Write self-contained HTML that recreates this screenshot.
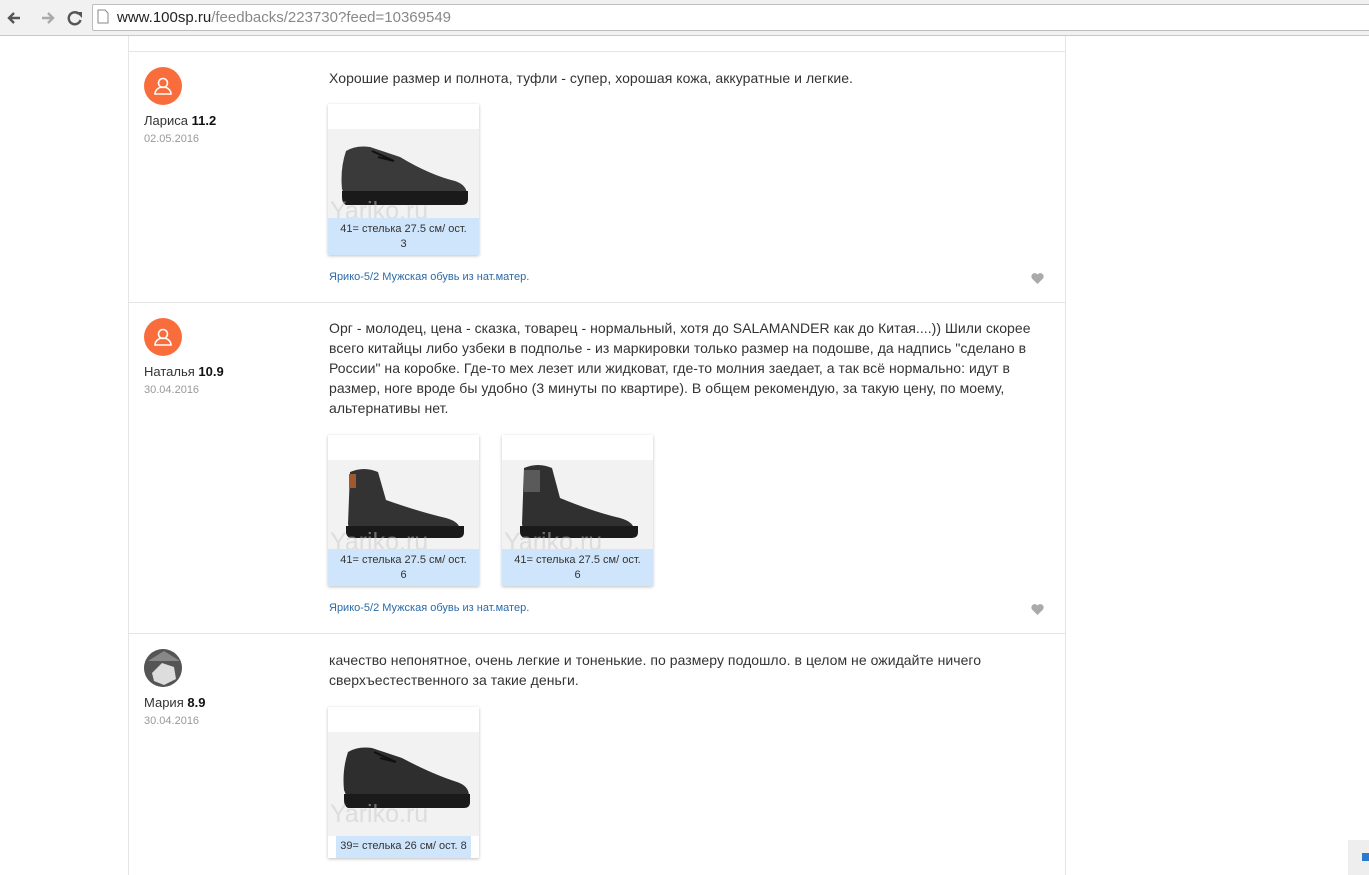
<!DOCTYPE html>
<html><head><meta charset="utf-8"><style>
*{margin:0;padding:0;box-sizing:border-box}
body{width:1369px;height:875px;overflow:hidden;background:#fff;font-family:"Liberation Sans",Arial,sans-serif;position:relative;color:#333}
.bar{position:absolute;left:0;top:0;width:1369px;height:36px;background:#f1f1f1;border-bottom:1px solid #c8c8c8}
.addr{position:absolute;left:92px;top:4px;width:1290px;height:27px;background:#fff;border:1px solid #bdbdbd;border-radius:2px}
.url{position:absolute;left:117px;top:9px;font-size:15px;color:#888}
.url b{font-weight:normal;color:#222}
.ab{position:absolute}
.vl{position:absolute;top:36px;width:1px;height:839px;background:#e5e5e5}
.hl{position:absolute;left:128px;width:937px;height:1px;background:#e5e5e5}
.av{position:absolute;left:144px;width:38px;height:38px;border-radius:50%;background:#f96d3d;overflow:hidden}
.name{position:absolute;left:144px;font-size:13px;color:#333}
.name b{color:#111}
.date{position:absolute;left:144px;font-size:11px;color:#999}
.txt{position:absolute;left:329px;font-size:14px;line-height:20px;color:#333;width:705px;letter-spacing:.05px}
.card{position:absolute;width:151px;height:151px;background:#fff;box-shadow:0 1px 3px rgba(0,0,0,.25)}
.img{position:absolute;left:0;top:25px;width:151px;height:95px;background:#f2f2f2;overflow:hidden}
.cap{position:absolute;left:0;top:114px;width:151px;height:37px;background:#cfe5fb;font-size:11px;color:#333;text-align:center;line-height:15px;padding-top:4px}
.wm{position:absolute;left:2px;top:68px;font-size:25px;color:rgba(200,200,200,.5)}
.link{position:absolute;left:329px;font-size:11px;color:#2b6aa8}
.heart{position:absolute;left:1031px}
</style></head><body>
<div class="bar">
<svg class="ab" style="left:6px;top:10px" width="80" height="16" viewBox="0 0 80 16"><path d="M14 8H3M8 3L3 8l5 5" stroke="#555" stroke-width="2.4" fill="none"/><path d="M36 8h11M42 3l5 5-5 5" stroke="#aaa" stroke-width="2.4" fill="none"/><path d="M73 4a6 6 0 1 0 1.5 6" stroke="#555" stroke-width="2.4" fill="none"/><path d="M70 2h6v6z" fill="#555"/></svg>
<div class="addr"></div>
<svg class="ab" style="left:97px;top:9px" width="12" height="15"><path d="M1 1h7l3 3v10H1z" fill="#fff" stroke="#888"/></svg>
<div class="url"><b>www.100sp.ru</b>/feedbacks/223730?feed=10369549</div>
</div>
<div class="vl" style="left:128px"></div><div class="vl" style="left:1065px"></div>
<div class="hl" style="top:51px"></div><div class="hl" style="top:302px"></div><div class="hl" style="top:633px"></div>

<div class="av" style="top:67px"><svg width="38" height="38"><circle cx="19" cy="16" r="4.5" fill="none" stroke="#fff" stroke-width="1.6"/><path d="M11 27a8 7 0 0 1 16 0z" fill="none" stroke="#fff" stroke-width="1.6"/></svg></div>
<div class="name" style="top:113px">Лариса <b>11.2</b></div>
<div class="date" style="top:133px">02.05.2016</div>
<div class="txt" style="top:68px">Хорошие размер и полнота, туфли - супер, хорошая кожа, аккуратные и легкие.</div>
<div class="card" style="left:328px;top:104px"><div class="img"><svg width="151" height="95"><path d="M18 22q10-6 24-4l30 10q30 18 55 24 12 4 12 14l-2 4H18l-4-10q-2-20 4-38z" fill="#3a3a3a"/><path d="M14 62h126v8q0 6-6 6H18q-4-2-4-8z" fill="#1a1a1a"/><path d="M44 22l22 10M50 28l16 4" stroke="#111" stroke-width="2"/></svg><div class="wm">Yariko.ru</div></div><div class="cap">41= стелька 27.5 см/ ост.<br>3</div></div>
<div class="link" style="top:271px">Ярико-5/2 Мужская обувь из нат.матер.</div>
<svg class="heart" style="top:273px" width="13" height="11" viewBox="0 0 13 11"><path d="M6.5 11L1 5.5A3 3 0 0 1 6.5 1.5 3 3 0 0 1 12 5.5z" fill="#aaa"/></svg>

<div class="av" style="top:318px"><svg width="38" height="38"><circle cx="19" cy="16" r="4.5" fill="none" stroke="#fff" stroke-width="1.6"/><path d="M11 27a8 7 0 0 1 16 0z" fill="none" stroke="#fff" stroke-width="1.6"/></svg></div>
<div class="name" style="top:364px">Наталья <b>10.9</b></div>
<div class="date" style="top:384px">30.04.2016</div>
<div class="txt" style="top:318px">Орг - молодец, цена - сказка, товарец - нормальный, хотя до SALAMANDER как до Китая....)) Шили скорее всего китайцы либо узбеки в подполье - из маркировки только размер на подошве, да надпись "сделано в России" на коробке. Где-то мех лезет или жидковат, где-то молния заедает, а так всё нормально: идут в размер, ноге вроде бы удобно (3 минуты по квартире). В общем рекомендую, за такую цену, по моему, альтернативы нет.</div>
<div class="card" style="left:328px;top:435px"><div class="img"><svg width="151" height="95"><path d="M22 12q14-6 28 0l8 28q34 12 60 18 14 4 14 12l-2 4H22l-2-10z" fill="#333"/><path d="M18 66h118v6q0 6-6 6H22q-4-2-4-6z" fill="#1a1a1a"/><rect x="21" y="14" width="7" height="14" fill="#a0582e"/></svg><div class="wm">Yariko.ru</div></div><div class="cap">41= стелька 27.5 см/ ост.<br>6</div></div>
<div class="card" style="left:502px;top:435px"><div class="img"><svg width="151" height="95"><path d="M22 8q14-6 28 0l8 30q34 14 60 20 14 4 14 12l-2 4H22l-2-10z" fill="#303030"/><path d="M18 66h118v6q0 6-6 6H22q-4-2-4-6z" fill="#1a1a1a"/><rect x="22" y="10" width="16" height="22" fill="#5a5a5a"/></svg><div class="wm">Yariko.ru</div></div><div class="cap">41= стелька 27.5 см/ ост.<br>6</div></div>
<div class="link" style="top:602px">Ярико-5/2 Мужская обувь из нат.матер.</div>
<svg class="heart" style="top:604px" width="13" height="11" viewBox="0 0 13 11"><path d="M6.5 11L1 5.5A3 3 0 0 1 6.5 1.5 3 3 0 0 1 12 5.5z" fill="#aaa"/></svg>

<div class="av" style="top:649px;background:#666"><svg width="38" height="38"><circle cx="19" cy="19" r="19" fill="#555"/><path d="M4 12l16-10 16 10z" fill="#888"/><path d="M8 24l10-10 12 4 2 12-12 6-10-4z" fill="#ddd"/></svg></div>
<div class="name" style="top:695px">Мария <b>8.9</b></div>
<div class="date" style="top:715px">30.04.2016</div>
<div class="txt" style="top:650px">качество непонятное, очень легкие и тоненькие. по размеру подошло. в целом не ожидайте ничего сверхъестественного за такие деньги.</div>
<div class="card" style="left:328px;top:707px"><div class="img" style="height:104px"><svg width="151" height="104"><path d="M20 20q10-6 24-4l30 10q30 16 55 24 12 4 12 14l-2 4H20l-4-10q-2-20 4-38z" fill="#2e2e2e"/><path d="M16 62h126v8q0 6-6 6H20q-4-2-4-8z" fill="#1a1a1a"/><path d="M46 20l22 10M52 26l16 4" stroke="#111" stroke-width="2"/></svg><div class="wm">Yariko.ru</div></div><div class="cap" style="left:8px;width:135px;top:129px;height:22px;padding-top:3px">39= стелька 26 см/ ост. 8</div></div>
<div class="ab" style="left:1348px;top:840px;width:21px;height:35px;background:#eee"></div>
<div class="ab" style="left:1362px;top:853px;width:7px;height:8px;background:#2a7bd0"></div>
</body></html>
